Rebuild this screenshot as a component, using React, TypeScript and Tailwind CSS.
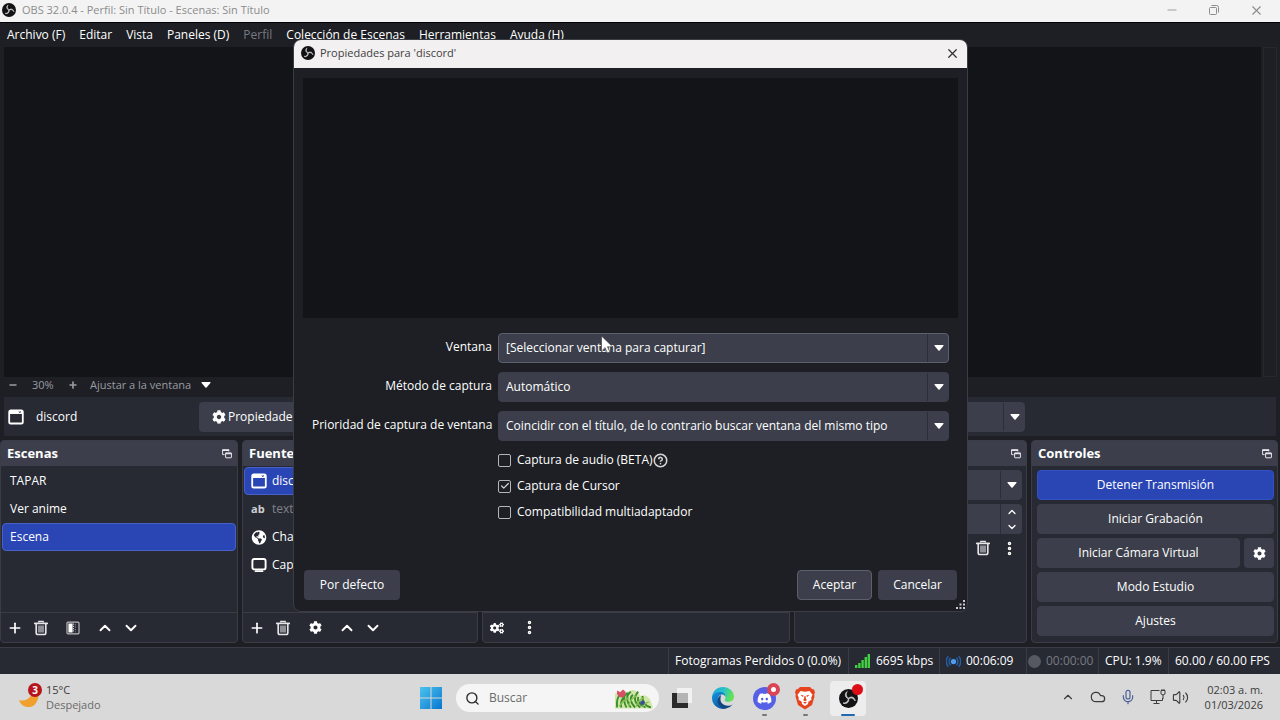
import { useState } from "react";
import type { ReactNode } from "react";
import {
    Check,
    ChevronDown,
    ChevronUp,
    CircleHelp,
    Cloud,
    EllipsisVertical,
    Mic,
    Minus,
    Plus,
    Search,
    Volume2,
    X,
} from "lucide-react";
import { FaCog, FaCogs, FaDiscord, FaGlobeAmericas } from "react-icons/fa";

const scenes = ["TAPAR", "Ver anime", "Escena"];

const fields = [
    { id: "ventana", label: "Ventana", value: "[Seleccionar ventana para capturar]" },
    { id: "metodo", label: "Método de captura", value: "Automático" },
    {
        id: "prioridad",
        label: "Prioridad de captura de ventana",
        value: "Coincidir con el título, de lo contrario buscar ventana del mismo tipo",
    },
];

function WindowIcon() {
    return (
        <svg className="size-4 shrink-0" viewBox="0 0 16 16" fill="none">
            <rect x="1.2" y="1.5" width="13.6" height="13" rx="1.6" stroke="#fff" strokeWidth="1.8" />
            <path d="M1 1.5h14V5H1z" fill="#fff" />
            <path d="M10.8 2.2l2 2m0-2l-2 2" stroke="#444a63" strokeWidth=".8" />
        </svg>
    );
}

function MonitorIcon() {
    return (
        <svg className="size-4 shrink-0" viewBox="0 0 16 16" fill="none">
            <rect x="1.4" y="2" width="13.2" height="10.4" rx="2" stroke="#fff" strokeWidth="1.9" />
            <path d="M4.5 14.2h7" stroke="#fff" strokeWidth="1.8" strokeLinecap="round" />
        </svg>
    );
}

function TrashIcon() {
    return (
        <svg className="size-4" viewBox="0 0 16 16" fill="none" stroke="#e4e4e6">
            <path d="M1.8 3.4h12.4" strokeWidth="1.8" strokeLinecap="round" />
            <path d="M5.8 2.6V1.3h4.4v1.3" strokeWidth="1.3" />
            <path d="M3.2 4v8.8c0 1 .7 1.7 1.7 1.7h6.2c1 0 1.7-.7 1.7-1.7V4" strokeWidth="1.7" />
            <path d="M6 5.5v7M8 5.5v7M10 5.5v7" strokeWidth="1.1" />
        </svg>
    );
}

function FilterIcon() {
    return (
        <svg className="size-3.5" viewBox="0 0 14 14">
            <rect x="1" y="1.2" width="12" height="11.6" rx="1" fill="none" stroke="#b9bac0" strokeWidth="1.2" />
            <path d="M2.4 2.6h4.2v8.8H2.4z" fill="#fff" />
            <path d="M7.4 2.6v9" stroke="#c9cad0" strokeWidth="1.2" strokeDasharray="1.2 1" />
            <path d="M9.4 3.2v8" stroke="#80828c" strokeWidth="1.2" strokeDasharray="1.2 1.2" />
        </svg>
    );
}

function PopoutIcon() {
    return (
        <svg className="size-2.5" viewBox="0 0 10 10" fill="none" stroke="#e6e6ea">
            <path d="M2.6 5.6H.6V.8h6.2v1.6" />
            <path d="M.3 1.2h6.8" strokeWidth="1.4" />
            <rect x="3.6" y="4" width="5.8" height="4.8" rx=".4" />
            <path d="M3.3 4.5h6.4" strokeWidth="1.6" />
        </svg>
    );
}

function Caret() {
    return (
        <svg className="h-1.5 w-2.5" viewBox="0 0 10 6" fill="#fff">
            <path d="M1 0h8q1 .2.4 1L5.6 5.4q-.6.6-1.2 0L.6 1Q0 .2 1 0z" />
        </svg>
    );
}

function ObsLogo({ className }: { className: string }) {
    return (
        <svg className={`shrink-0 ${className}`} viewBox="0 0 24 24" fill="none">
            <circle cx="12" cy="12" r="12" fill="#131315" />
            {[0, 120, 240].map((angle) => (
                <g key={angle} transform={`rotate(${angle} 12 12)`}>
                    <path d="M10.5 3.2C7.600 5 7.200 8.800 9.600 10.900c.9.800 1.800 1.100 2.900 1.100-1.700-1-2.900-2.300-3.200-4.200-.3-1.700.1-3.200 1.200-4.600z" fill="#cfcfcf" stroke="#cfcfcf" strokeWidth=".9" />
                </g>
            ))}
        </svg>
    );
}

function SelectBox({ id, value, label, focused }: { id: string; value: string; label?: string; focused?: boolean }) {
    return (
        <div className="relative h-[30px] w-full">
            <select
                id={id}
                aria-label={label}
                className={`h-full w-full appearance-none rounded border bg-[#3c3f4b] pl-[7px] text-white outline-none ${focused ? "border-[#5c606d]" : "border-[#3c3f4b]"
                    }`}
            >
                <option>{value}</option>
            </select>
            <div className="pointer-events-none absolute inset-y-px right-0 grid w-[22px] place-items-center border-l border-[#2c2f39]">
                <Caret />
            </div>
        </div>
    );
}

function Dock({ title, children, footer }: { title?: string; children?: ReactNode; footer?: ReactNode }) {
    return (
        <section className="flex min-w-0 flex-col overflow-hidden rounded border border-[#3a3d48] bg-[#272a33]">
            <header className="flex h-[25px] shrink-0 items-center bg-[#3c3f4b] pr-[5px] pl-1.5">
                {title && <h2 className="text-[13px] font-bold">{title}</h2>}
                <button aria-label="Desacoplar panel" className="ml-auto">
                    <PopoutIcon />
                </button>
            </header>
            <div className="flex-1">{children}</div>
            {footer && (
                <footer className="flex h-[30px] shrink-0 items-center border-t border-[#3a3d48] pl-px">{footer}</footer>
            )}
        </section>
    );
}

function ToolButton({ label, children }: { label: string; children: ReactNode }) {
    return (
        <button aria-label={label} className="grid h-7 w-[26px] place-items-center">
            {children}
        </button>
    );
}

function ControlButton({ children, active }: { children: ReactNode; active?: boolean }) {
    return (
        <button
            className={`h-[30px] w-full rounded border ${active ? "border-[#3350c4] bg-[#2a46b4]" : "border-[#3c3f4b] bg-[#3c3f4b]"
                }`}
        >
            {children}
        </button>
    );
}

function PropertiesDialog() {
    const [options, setOptions] = useState([
        { label: "Captura de audio (BETA)", checked: false, help: true },
        { label: "Captura de Cursor", checked: true },
        { label: "Compatibilidad multiadaptador", checked: false },
    ]);

    const toggle = (index: number) => {
        setOptions(options.map((o, i) => (i === index ? { ...o, checked: !o.checked } : o)));
    };

    return (
        <div
            role="dialog"
            aria-label="Propiedades para 'discord'"
            className="absolute top-[39px] left-[293px] flex w-[675px] flex-col overflow-hidden rounded-lg border border-[#3a3d44] bg-[#1d1f24]"
        >
            <div className="flex h-7 items-center bg-[#f3f0f1] px-[7px] pb-0.5 text-[11px] text-[#404040]">
                <ObsLogo className="size-3.5" />
                <span className="ml-[5px]">Propiedades para 'discord'</span>
                <button aria-label="Cerrar" className="ml-auto text-[#333]">
                    <X size={15} strokeWidth={2} />
                </button>
            </div>
            <div className="mx-[9px] mt-[10px] h-60 bg-[#131418]" />
            <div className="mt-[15px] grid grid-cols-[180px_1fr] gap-x-1.5 gap-y-[9px] px-[18px]">
                {fields.map((field, index) => (
                    <div key={field.id} className="contents">
                        <label htmlFor={field.id} className="pt-[5px] text-right whitespace-nowrap">
                            {field.label}
                        </label>
                        <SelectBox id={field.id} value={field.value} focused={index === 0} />
                    </div>
                ))}
            </div>
            <div className="mt-1.5 ml-[204px] flex flex-col">
                {options.map((option, index) => (
                    <label key={option.label} className="flex h-[26px] items-center">
                        <span className="mr-1.5 grid size-[13px] place-items-center">
                            <input
                                type="checkbox"
                                checked={option.checked}
                                onChange={() => toggle(index)}
                                className="col-start-1 row-start-1 size-full appearance-none rounded-xs border border-[#b4b5b9]"
                            />
                            {option.checked && (
                                <Check size={10} strokeWidth={3} className="pointer-events-none col-start-1 row-start-1 text-[#d4d4d6]" />
                            )}
                        </span>
                        {option.label}
                        {option.help && <CircleHelp size={15} strokeWidth={2.5} className="text-[#d4d4d6]" />}
                    </label>
                ))}
            </div>
            <div className="mt-[45px] mb-[11px] flex gap-1.5 px-[10px]">
                <button className="mr-auto h-[30px] w-24 rounded bg-[#3c3f4b]">Por defecto</button>
                <button className="h-[30px] w-[75px] rounded border border-[#5c606d] bg-[#3c3f4b]">Aceptar</button>
                <button className="h-[30px] w-[79px] rounded bg-[#3c3f4b]">Cancelar</button>
            </div>
            <svg className="absolute right-px bottom-px size-2.5" viewBox="0 0 10 10" fill="#c9cacf">
                <path d="M7 0h2v2H7zM7 3.5h2v2H7zM7 7h2v2H7zM3.5 3.5h2v2h-2zM3.5 7h2v2h-2zM0 7h2v2H0z" />
            </svg>
        </div>
    );
}

function EdgeIcon() {
    return (
        <svg className="size-6" viewBox="0 0 24 24">
            <defs>
                <linearGradient id="edgeTop" x1="0" y1="0" x2="1" y2=".3">
                    <stop offset="0" stopColor="#1c9fe0" />
                    <stop offset=".55" stopColor="#29c3c9" />
                    <stop offset="1" stopColor="#62e257" />
                </linearGradient>
                <linearGradient id="edgeLow" x1="0" y1="0" x2=".6" y2="1">
                    <stop offset="0" stopColor="#1792dd" />
                    <stop offset="1" stopColor="#0c5aa8" />
                </linearGradient>
            </defs>
            <path d="M1 12C1 5.500 6 1 12 1s11 4.400 11 9.600c0 3.300-2.500 5.400-5.600 5.400-2.500 0-3.800-.9-3.800-1.700 0-.6.900-1 .9-2.600 0-2-1.800-3.500-4.200-3.500C5.800 8.200 2 10 1 12z" fill="url(#edgeTop)" />
            <path d="M1 12c.4-4 4.500-6 8.600-6 2.600 0 4.700 1.900 4.900 4.600-1-1.500-2.600-2.400-4.200-2.200C7.500 9 6.600 12 7.200 15c.8 4 4.300 7.300 8 7.500A11 11 0 0 1 1 12z" fill="url(#edgeLow)" />
            <path d="M9.500 12.500c-.6 4.500 3.500 7.300 7.500 7.200 1.700 0 3.200-.6 4.600-1.300A11 11 0 0 1 15 22.600c-4.500.4-8.600-3.600-8.400-7.800.1-2.600 1.300-4.900 3.500-5.800-.4 1-.5 2.200-.6 3.500z" fill="#12467f" />
        </svg>
    );
}

function SearchArt() {
    return (
        <svg className="h-[22px] w-[38px]" viewBox="0 0 36 20" fill="none">
            <path d="M0 20V6q5-5 10 0 8-8 14 2 9-3 12 12z" fill="#cfe6a8" />
            <path d="M2 19Q1 10 5 7M6 19Q4 12 12 5M11 19Q8 14 9 9M15 19Q8 9 15 4M19 19Q12 11 17 7M24 19Q15 12 22 4M29 19Q20 15 22 9M34 19Q26 17 26 8" stroke="#3d8d2f" strokeWidth="1.8" />
            <path d="M4 18Q9 11 13 10M13 18Q14 11 20 8M20 18Q22 12 27 10M26 18Q29 14 32 14" stroke="#86c14b" strokeWidth="1.4" />
            <path d="M2 3l3 1.500L7.500 2 10 4q1 5-4 5.500Q1 9 2 3z" fill="#d55067" />
            <circle cx="26" cy="14.500" r="2.200" fill="#3f4f96" />
        </svg>
    );
}

function Taskbar() {
    return (
        <footer className="grid h-[46px] shrink-0 grid-cols-[1fr_auto_1fr] items-center bg-[#d9d9d9] text-[11px] text-[#3c3c3c]">
            <div className="flex items-center pl-[18px]">
                <svg className="mr-1 mb-1 size-6" viewBox="0 0 24 24">
                    <path d="M1 17Q10 20 16 8q6 2 4 8-3 9-11 8-6-1-8-7z" fill="#f0a02c" />
                    <circle cx="17" cy="7" r="7" fill="#b7151c" />
                    <text x="17" y="11" textAnchor="middle" fontSize="10" fontWeight="700" fill="#fff">3</text>
                </svg>
                <div className="leading-[15px]">
                    <p>15°C</p>
                    <p className="text-[#6a6a6a]">Despejado</p>
                </div>
            </div>
            <div className="flex items-center pt-0.5 pl-1.5">
                <button aria-label="Inicio">
                    <svg className="size-[22px]" viewBox="0 0 22 22">
                        <defs>
                            <linearGradient id="win" x1="0" y1="0" x2="1" y2="1">
                                <stop offset="0" stopColor="#4cc3ee" />
                                <stop offset="1" stopColor="#0876cf" />
                            </linearGradient>
                        </defs>
                        <path d="M0 0h10.500v10.500H0zM11.500 0H22v10.500H11.500zM0 11.500h10.500V22H0zM11.500 11.500H22V22H11.500z" fill="url(#win)" />
                    </svg>
                </button>
                <label className="ml-3.5 flex h-7 w-[203px] items-center rounded-full bg-[#f4f5f4] pr-1.5 pl-[9px]">
                    <Search size={15} strokeWidth={2.2} className="text-[#2b2b2b]" />
                    <input
                        aria-label="Buscar"
                        placeholder="Buscar"
                        className="ml-[9px] w-0 flex-1 bg-transparent text-xs outline-none placeholder:text-[#6b6b6b]"
                    />
                    <SearchArt />
                </label>
                <button aria-label="Vista de tareas" className="ml-3">
                    <svg className="size-[22px]" viewBox="0 0 22 22">
                        <path d="M6 1h15v15H6z" fill="#f2f2f2" />
                        <path d="M1 6h16v15H1z" fill="#2b2b2b" />
                        <path d="M6 6h11v10H6z" fill="#b5b5b5" />
                    </svg>
                </button>
                <button aria-label="Edge" className="ml-[18px]">
                    <EdgeIcon />
                </button>
                <button aria-label="Discord" className="relative ml-[18px]">
                    <span className="grid size-[23px] place-items-center rounded-full bg-[#5560e6]">
                        <FaDiscord className="size-[15px] text-white" />
                    </span>
                    <span className="absolute -top-1 -right-1 size-[13px] rounded-full border-4 border-[#da4453] bg-white" />
                    <span className="absolute -bottom-1.5 left-[9px] h-0.5 w-[5px] rounded bg-[#777]" />
                </button>
                <button aria-label="Brave" className="relative ml-[18px]">
                    <svg className="h-6 w-[22px]" viewBox="0 0 22 24">
                        <path d="M6 1h10l2 2 2 .500 1 3-.8 2 .3 2-2.500 8.500L11 23.500 4 19 1.500 10.500l.3-2L1 6.500l1-3L4 3z" fill="#e8431f" />
                        <path d="M6.500 5l4.500.8 4.500-.8 3 3.800-1.300 3 .3 2-3 1.700-.5 2.500L11 20l-3-2-.5-2.500-3-1.700.3-2-1.300-3z" fill="#fff" />
                        <path d="M6.300 8.800l3.400.6-.8 1.600zM15.700 8.800l-3.400.6.8 1.600zM10.500 10h1l.6 3.200 1 .8-2.100 1.200L8.900 14l1-.8zM9 16.400l2-.6 2 .6-2 1.400z" fill="#e8431f" />
                    </svg>
                    <span className="absolute -bottom-1.5 left-[9px] h-0.5 w-[5px] rounded bg-[#777]" />
                </button>
                <button aria-label="OBS" className="relative ml-3.5 grid h-[35px] w-9 place-items-center rounded bg-[#ededed]">
                    <ObsLogo className="size-[19px]" />
                    <span className="absolute top-[3px] right-[3px] size-[11px] rounded-full bg-[#dd0d18]" />
                    <span className="absolute bottom-0 left-[11px] h-0.5 w-3.5 rounded bg-[#2069b5]" />
                </button>
            </div>
            <div className="flex items-center justify-end pr-[17px]">
                <ChevronUp size={14} />
                <Cloud size={16} strokeWidth={1.8} className="ml-[15px]" />
                <Mic size={16} strokeWidth={1.8} className="ml-3.5 text-[#4d6296]" />
                <svg className="ml-3.5 size-4" viewBox="0 0 16 16" fill="none" stroke="#3c3c3c">
                    <path d="M9.500 1.500H1v10h11.500V9M3.500 14.500h6M6.500 11.500v3" />
                    <path d="M11 1.500h4V5q-2 2-4 0zM13 6v4M12 0v1.500M14 0v1.500" />
                </svg>
                <Volume2 size={17} strokeWidth={1.6} className="ml-1.5" />
                <div className="ml-4 text-right leading-[15px]">
                    <p>02:03 a. m.</p>
                    <p>01/03/2026</p>
                </div>
            </div>
        </footer>
    );
}

export default function App() {
    const [scene, setScene] = useState("Escena");

    return (
        <div className="relative flex min-h-screen flex-col overflow-hidden bg-[#1d1f24] font-['Open_Sans','Noto_Sans',sans-serif] text-[12px] text-white">
            {/* Title bar */}
            <header className="flex h-[22px] shrink-0 items-center bg-[#f3f3f3] pb-0.5 pl-0.5 text-[11px] text-[#8c8c8c]">
                <ObsLogo className="size-3.5" />
                <span className="ml-1.5">OBS 32.0.4 - Perfil: Sin Título - Escenas: Sin Título</span>
                <div className="mr-4 ml-auto flex items-center gap-7">
                    <button aria-label="Minimizar"><Minus size={14} strokeWidth={1.4} /></button>
                    <button aria-label="Restaurar">
                        <svg className="size-3.5" viewBox="0 0 14 14" fill="none" stroke="#8c8c8c">
                            <rect x="2.500" y="4.500" width="7" height="7" rx="1" />
                            <path d="M4.500 2.500h5q2 0 2 2v5" />
                        </svg>
                    </button>
                    <button aria-label="Cerrar ventana"><X size={15} strokeWidth={1.8} /></button>
                </div>
            </header>
            <nav className="flex h-[25px] shrink-0 items-center gap-3.5 border-t border-black pb-px pl-[7px]">
                <button>Archivo (F)</button>
                <button>Editar</button>
                <button>Vista</button>
                <button>Paneles (D)</button>
                <button disabled className="text-[#777a82]">Perfil</button>
                <button>Colección de Escenas</button>
                <button>Herramientas</button>
                <button>Ayuda (H)</button>
            </nav>

            {/* Preview */}
            <main className="flex flex-1 pr-[3px] pl-1">
                <div className="flex-1 bg-[#131418]" />
                <div className="ml-0.5 w-3.5 border border-[#26282e]" />
            </main>
            <div className="flex h-[20px] shrink-0 items-center pb-1 pl-2 text-[11px] text-[#9a9ba1]">
                <button aria-label="Alejar"><Minus size={10} strokeWidth={4} /></button>
                <span className="ml-3.5 w-[22px]">30%</span>
                <button aria-label="Acercar" className="ml-[14px]"><Plus size={10} strokeWidth={4} /></button>
                <button className="ml-3 flex items-center gap-2.5">Ajustar a la ventana <Caret /></button>
            </div>
            <div className="mx-1 mb-1 flex h-[39px] shrink-0 items-center bg-[#272a33] pl-1">
                <WindowIcon />
                <span className="ml-3 w-[163px]">discord</span>
                <button className="flex h-[30px] items-center gap-0.5 rounded bg-[#3c3f4b] px-[13px]">
                    <FaCog size={14} /> Propiedades
                </button>
                <div className="mr-[251px] ml-auto w-[300px]">
                    <SelectBox id="fuente-ventana" label="Ventana de la fuente" value="" />
                </div>
            </div>

            {/* Docks */}
            <div className="grid h-[203px] shrink-0 grid-cols-[238fr_236fr_308fr_233fr_247fr] gap-1 pr-0.5">
                <Dock
                    title="Escenas"
                    footer={
                        <>
                            <ToolButton label="Añadir escena"><Plus size={16} strokeWidth={2.5} /></ToolButton>
                            <ToolButton label="Eliminar escena"><TrashIcon /></ToolButton>
                            <span className="w-1.5" />
                            <ToolButton label="Filtros de escena"><FilterIcon /></ToolButton>
                            <span className="w-1.5" />
                            <ToolButton label="Subir escena"><ChevronUp size={18} strokeWidth={2.5} /></ToolButton>
                            <ToolButton label="Bajar escena"><ChevronDown size={18} strokeWidth={2.5} /></ToolButton>
                        </>
                    }
                >
                    <ul className="px-px pt-px">
                        {scenes.map((name) => (
                            <li key={name}>
                                <button
                                    onClick={() => setScene(name)}
                                    className={`h-7 w-full rounded border pl-[7px] text-left ${scene === name ? "border-[#4761c9] bg-[#2a46b4]" : "border-transparent"
                                        }`}
                                >
                                    {name}
                                </button>
                            </li>
                        ))}
                    </ul>
                </Dock>
                <Dock
                    title="Fuentes"
                    footer={
                        <>
                            <ToolButton label="Añadir fuente"><Plus size={16} strokeWidth={2.5} /></ToolButton>
                            <ToolButton label="Eliminar fuente"><TrashIcon /></ToolButton>
                            <span className="w-1.5" />
                            <ToolButton label="Propiedades de fuente"><FaCog size={13} /></ToolButton>
                            <span className="w-1.5" />
                            <ToolButton label="Subir fuente"><ChevronUp size={18} strokeWidth={2.5} /></ToolButton>
                            <ToolButton label="Bajar fuente"><ChevronDown size={18} strokeWidth={2.5} /></ToolButton>
                        </>
                    }
                >
                    <ul className="px-px pt-px">
                        <li className="flex h-7 items-center gap-[5px] rounded border border-[#4761c9] bg-[#2a46b4] pl-1.5">
                            <WindowIcon /> discord
                        </li>
                        <li className="flex h-7 items-center gap-[5px] pl-[7px] text-[#80828a]">
                            <span className="w-4 text-[11px] font-bold text-[#d0d0d4]">ab</span> text
                        </li>
                        <li className="flex h-7 items-center gap-[5px] pl-[7px]">
                            <FaGlobeAmericas size={15} className="w-4" /> Chat
                        </li>
                        <li className="flex h-7 items-center gap-[5px] pl-[7px]">
                            <MonitorIcon /> Captura
                        </li>
                    </ul>
                </Dock>
                {/* Audio mixer */}
                <Dock
                    footer={
                        <>
                            <ToolButton label="Audio avanzado"><FaCogs size={14} /></ToolButton>
                            <span className="w-1.5" />
                            <ToolButton label="Menú del mezclador"><EllipsisVertical size={17} strokeWidth={3} /></ToolButton>
                        </>
                    }
                />
                {/* Scene transitions */}
                <Dock>
                    <div className="flex flex-col gap-1 pt-1 pr-1 pl-1.5">
                        <SelectBox id="transicion" label="Transición" value="" />
                        <div className="flex h-[30px] rounded bg-[#3c3f4b]">
                            <input aria-label="Duración" className="w-0 flex-1 bg-transparent" />
                            <div className="flex w-[22px] flex-col items-center justify-around border-l border-[#2c2f39]">
                                <button aria-label="Aumentar"><ChevronUp size={12} strokeWidth={2.5} /></button>
                                <button aria-label="Disminuir"><ChevronDown size={12} strokeWidth={2.5} /></button>
                            </div>
                        </div>
                        <div className="-mt-1 flex justify-end">
                            <ToolButton label="Eliminar transición"><TrashIcon /></ToolButton>
                            <ToolButton label="Menú de transición"><EllipsisVertical size={17} strokeWidth={3} /></ToolButton>
                        </div>
                    </div>
                </Dock>
                <Dock title="Controles">
                    <div className="flex flex-col gap-1 pt-1 pr-[3px] pl-[5px]">
                        <ControlButton active>Detener Transmisión</ControlButton>
                        <ControlButton>Iniciar Grabación</ControlButton>
                        <div className="flex gap-1">
                            <ControlButton>Iniciar Cámara Virtual</ControlButton>
                            <button aria-label="Configurar cámara" className="grid h-[30px] w-[30px] shrink-0 place-items-center rounded bg-[#3c3f4b]">
                                <FaCog size={13} />
                            </button>
                        </div>
                        <ControlButton>Modo Estudio</ControlButton>
                        <ControlButton>Ajustes</ControlButton>
                    </div>
                </Dock>
            </div>

            {/* Status bar */}
            <div className="mt-1 flex h-[27px] shrink-0 items-stretch justify-end border-t border-[#3a3d48] bg-[#272a33] whitespace-nowrap *:flex *:items-center *:border-l *:border-[#3a3d48]">
                <div className="w-[180px] pl-1.5">Fotogramas Perdidos 0 (0.0%)</div>
                <div className="w-[91px] gap-1.5 pl-1.5">
                    <svg className="size-[15px]" viewBox="0 0 15 15" fill="#3fd13f">
                        <path d="M0 11h2.400v3H0zM3.200 9h2.400v5H3.200zM6.400 6h2.400v8H6.400zM9.600 3H12v11H9.600zM12.600 0H15v14h-2.400z" />
                    </svg>
                    6695 kbps
                </div>
                <div className="w-[87px] gap-[5px] pl-1.5">
                    <svg className="size-[15px]" viewBox="0 0 16 16" fill="none" stroke="#2461a8" strokeWidth="1.5">
                        <circle cx="8" cy="8" r="2.8" fill="#4ba0f5" stroke="none" />
                        <path d="M5 4a5.500 5.500 0 0 0 0 8M11 4a5.500 5.500 0 0 1 0 8M2.500 2.500a8 8 0 0 0 0 11M13.500 2.500a8 8 0 0 1 0 11" />
                    </svg>
                    00:06:09
                </div>
                <div className="w-[72px] gap-[5px] pl-px text-[#777a82]">
                    <span className="size-[13px] rounded-full bg-[#565962]" /> 00:00:00
                </div>
                <div className="w-[70px] pl-1.5">CPU: 1.9%</div>
                <div className="w-28 pl-1.5">60.00 / 60.00 FPS</div>
            </div>

            <Taskbar />
            <PropertiesDialog />

            {/* Mouse pointer */}
            <svg className="pointer-events-none absolute top-[335px] left-[600px] h-5 w-3.5" viewBox="0 0 14 20">
                <path d="M1.500 1v15l3.600-3.400L7.400 18l2.400-1-2.300-5.200h5z" fill="#fff" stroke="#333" strokeWidth=".6" />
            </svg>
        </div>
    );
}
